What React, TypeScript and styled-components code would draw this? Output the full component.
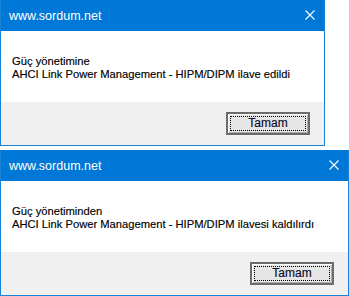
import React from "react";
import styled, {createGlobalStyle} from "styled-components";

const GlobalStyle = createGlobalStyle`
    html, body {
        margin: 0;
        padding: 0;
        background: #ffffff;
    }
`

const Stack = styled.div`
    display: flex;
    flex-direction: column;
    align-items: flex-start;
    gap: 4px;
`

const Dialog = styled.div<{ $width: number }>`
    width: ${p => p.$width}px;
    height: 146px;
    box-sizing: border-box;
    border: 1px solid #1883d7;
    border-top: none;
    display: flex;
    flex-direction: column;
    background: #ffffff;
    font-family: "Liberation Sans", Arial, sans-serif;
`

const TitleBar = styled.div`
    height: 31px;
    background: #0078d7;
    display: flex;
    align-items: center;
    justify-content: space-between;
    padding: 1px 9px 0 8px;
    box-sizing: border-box;
    color: #ffffff;
    font-size: 12.5px;
    flex-shrink: 0;

    svg {
        width: 10px;
        height: 10px;
        margin-top: -2px;
    }
`

const Content = styled.div`
    height: 72px;
    box-sizing: border-box;
    padding: 24px 11px 0;
    font-size: 11.2px;
    line-height: 13px;
    color: #000000;
    -webkit-text-stroke: 0.15px #000000;
`

const Footer = styled.div`
    height: 42px;
    background: #f0f0f0;
    display: flex;
    align-items: center;
    justify-content: flex-end;
    padding: 0 14px 1px 0;
`

const Button = styled.button`
    width: 84px;
    height: 23px;
    box-sizing: border-box;
    border: 2px solid #6c6c6c;
    background: #e6e6e6;
    box-shadow: inset 1px 1px 0 #ffffff, inset -1px -1px 0 #adadad;
    position: relative;
    padding: 0;
    font-family: "Liberation Sans", Arial, sans-serif;
    font-size: 12px;
    color: #0a0a28;
    -webkit-text-stroke: 0.15px #0a0a28;

    &::after {
        content: "";
        position: absolute;
        inset: 2px;
        border: 1px dotted #000000;
    }
`

const CloseIcon = () => (
    <svg viewBox="0 0 10 10">
        <path d="M0.5 0.5 L9.5 9.5 M9.5 0.5 L0.5 9.5" stroke="#ffffff" strokeWidth="1.1" fill="none"/>
    </svg>
)

const messages = [
    {width: 325, first: "Güç yönetimine", second: "AHCI Link Power Management - HIPM/DIPM ilave edildi"},
    {width: 349, first: "Güç yönetiminden", second: "AHCI Link Power Management - HIPM/DIPM ilavesi kaldılırdı"},
]

const App = () => {
    return (
        <>
            <GlobalStyle/>
            <Stack>
                {messages.map(m => (
                    <Dialog key={m.first} $width={m.width}>
                        <TitleBar>
                            <span>www.sordum.net</span>
                            <CloseIcon/>
                        </TitleBar>
                        <Content>
                            <div>{m.first}</div>
                            <div>{m.second}</div>
                        </Content>
                        <Footer>
                            <Button>Tamam</Button>
                        </Footer>
                    </Dialog>
                ))}
            </Stack>
        </>
    )
}

export default App
